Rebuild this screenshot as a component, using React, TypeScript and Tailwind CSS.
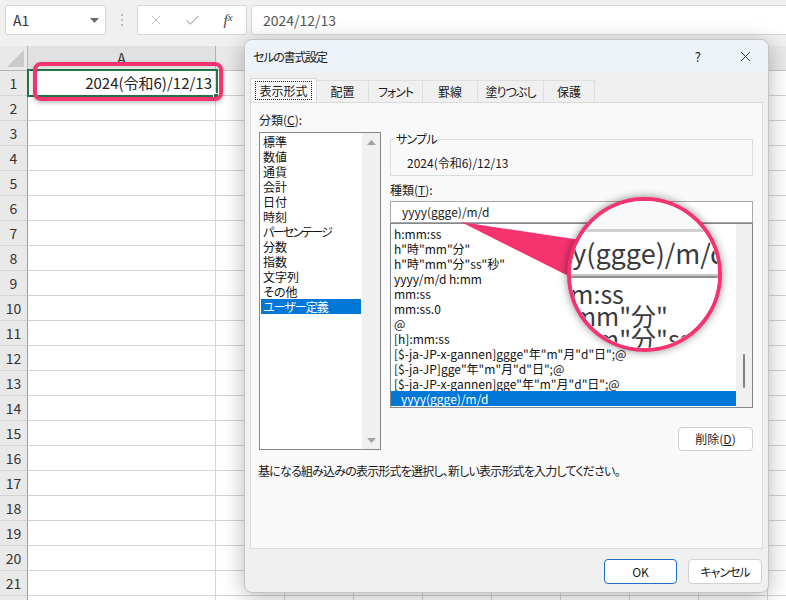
import { Check, X } from "lucide-react";

const CATEGORIES = [
  "標準",
  "数値",
  "通貨",
  "会計",
  "日付",
  "時刻",
  "パーセンテージ",
  "分数",
  "指数",
  "文字列",
  "その他",
  "ユーザー定義",
];

const FORMATS = [
  "h:mm:ss",
  'h"時"mm"分"',
  'h"時"mm"分"ss"秒"',
  "yyyy/m/d h:mm",
  "mm:ss",
  "mm:ss.0",
  "@",
  "[h]:mm:ss",
  '[$-ja-JP-x-gannen]ggge"年"m"月"d"日";@',
  '[$-ja-JP]gge"年"m"月"d"日";@',
  '[$-ja-JP-x-gannen]gge"年"m"月"d"日";@',
  "yyyy(ggge)/m/d",
];

const TABS = [
  { label: "配置", w: "w-[52px]" },
  { label: "フォント", w: "w-[54px] tracking-[-1px]" },
  { label: "罫線", w: "w-[55px]" },
  { label: "塗りつぶし", w: "w-[66px] tracking-[-1px]" },
  { label: "保護", w: "w-[51px]" },
];

const ROWS = Array.from({ length: 22 }, (_, i) => i + 1);
const OTHER_COLS = Array.from({ length: 9 }, (_, i) => i);

function FormulaBar() {
  return (
    <div className="flex h-[46px] items-start bg-[#f0f0f0] pl-[5px] pt-[5px]">
      <div className="flex h-[30px] w-[101px] items-center justify-between rounded-[3px] border border-[#d6d6d6] bg-white pl-[7px] pr-[6px] text-[14px] text-[#333]">
        <span>A1</span>
        <svg width="9" height="5" viewBox="0 0 9 5">
          <path d="M0 0h9L4.5 5z" fill="#6b6b6b" />
        </svg>
      </div>
      <div className="flex h-[30px] w-[31px] flex-col items-center justify-center gap-[3px]">
        <span className="h-[2px] w-[2px] rounded-full bg-[#a9a9a9]" />
        <span className="h-[2px] w-[2px] rounded-full bg-[#a9a9a9]" />
        <span className="h-[2px] w-[2px] rounded-full bg-[#a9a9a9]" />
      </div>
      <div className="flex h-[30px] w-[110px] items-center rounded-[3px] border border-[#d6d6d6] bg-white">
        <span className="flex w-[36px] justify-center text-[#b5b5b5]">
          <X size={16} strokeWidth={1.4} />
        </span>
        <span className="flex w-[36px] justify-center text-[#b5b5b5]">
          <Check size={17} strokeWidth={1.6} />
        </span>
        <span className="flex w-[36px] justify-center font-['Liberation_Serif',serif] text-[15px] italic text-[#444]">
          f<span className="text-[11px]">x</span>
        </span>
      </div>
      <div className="-mr-[10px] ml-[4px] flex h-[30px] flex-1 items-center rounded-[3px] border border-[#d6d6d6] bg-white pl-[11px] text-[14px] text-[#555]">
        2024/12/13
      </div>
    </div>
  );
}

function Sheet() {
  return (
    <div className="flex flex-col">
      <div className="flex h-[25px]">
        <div className="flex w-[28px] shrink-0 items-end justify-end border-b border-r border-[#b4b4b4] bg-[#e9e9e9] pb-[3px] pr-[3px]">
          <svg width="17" height="17" viewBox="0 0 17 17">
            <path d="M17 0V17H0z" fill="#cacaca" />
          </svg>
        </div>
        <div className="flex w-[188px] shrink-0 items-center justify-center border-b border-r border-[#b4b4b4] bg-[#e1e1e1] text-[14px] text-[#333]">
          A
        </div>
        {OTHER_COLS.map((c) => (
          <div
            key={c}
            className="w-[69px] shrink-0 border-b border-r border-[#c6c6c6] bg-[#e9e9e9]"
          />
        ))}
      </div>
      {ROWS.map((r) => (
        <div key={r} className="flex h-[25px]">
          <div className="flex w-[28px] shrink-0 items-center justify-center border-b border-r border-b-[#d4d4d4] border-r-[#9c9c9c] bg-[#e9e9e9] text-[14px] text-[#333]">
            {r}
          </div>
          <div className="flex w-[188px] shrink-0 items-center justify-end border-b border-r border-[#d4d4d4] pr-[3px] text-[15px] text-[#222]">
            {r === 1 ? "2024(令和6)/12/13" : ""}
          </div>
          {OTHER_COLS.map((c) => (
            <div
              key={c}
              className="w-[69px] shrink-0 border-b border-r border-[#d4d4d4]"
            />
          ))}
        </div>
      ))}
    </div>
  );
}

function CategoryList() {
  return (
    <div className="flex h-[318px] w-[122px] border border-[#828790] bg-white">
      <div className="flex flex-1 flex-col px-px pt-px">
        {CATEGORIES.map((c) => (
          <div
            key={c}
            className={
              c === "ユーザー定義"
                ? "h-[15px] bg-[#0078d7] pl-[2px] text-[12px] leading-[15px] tracking-[-1px] text-white"
                : c === "パーセンテージ"
                  ? "h-[15px] pl-[2px] text-[12px] leading-[15px] tracking-[-1.6px] text-[#111]"
                  : "h-[15px] pl-[2px] text-[12px] leading-[15px] text-[#111]"
            }
          >
            {c}
          </div>
        ))}
      </div>
      <div className="flex w-[18px] flex-col items-center justify-between bg-[#f0f0f0] pb-[6px] pt-[7px]">
        <svg width="9" height="5" viewBox="0 0 9 5">
          <path d="M0 5h9L4.5 0z" fill="#a3a3a3" />
        </svg>
        <svg width="9" height="5" viewBox="0 0 9 5">
          <path d="M0 0h9L4.5 5z" fill="#a3a3a3" />
        </svg>
      </div>
    </div>
  );
}

function FormatList() {
  return (
    <div className="flex h-[185px] border border-[#828790] bg-white">
      <div className="flex flex-1 flex-col pt-[2px]">
        {FORMATS.map((f, i) =>
          i === FORMATS.length - 1 ? (
            <div
              key={f}
              className="h-[15px] bg-[#0078d7] pl-[10px] text-[12px] leading-[15px] text-white"
            >
              {f}
            </div>
          ) : (
            <div
              key={f}
              className="h-[15px] whitespace-nowrap pl-[3px] text-[12px] leading-[15px] text-[#111]"
            >
              {f}
            </div>
          )
        )}
      </div>
      <div className="flex w-[16px] justify-center bg-[#f0f0f0] pt-[130px]">
        <div className="h-[34px] w-[2px] rounded-full bg-[#858585]" />
      </div>
    </div>
  );
}

function Dialog() {
  return (
    <div className="absolute left-[244px] top-[39px] flex h-[554px] w-[525px] flex-col rounded-[8px] border border-[#c4c4c4] bg-[#f0f0f0] text-[#1a1a1a] shadow-[0_4px_22px_rgba(0,0,0,0.28)]">
      <div className="flex h-[33px] items-center rounded-t-[8px] bg-[#eef3fa] pl-[8px] text-[12px]">
        <span className="tracking-[-1.2px]">セルの書式設定</span>
        <span className="ml-auto text-[13px]">?</span>
        <span className="ml-[36px] mr-[14px] flex text-[#222]">
          <X size={17} strokeWidth={1.3} />
        </span>
      </div>

      <div className="mt-[5px] flex h-[24px] items-end px-[5px] text-[12px]">
        <div className="flex h-[24px] w-[67px] items-center justify-center border border-b-0 border-[#d9d9d9] bg-[#f9f9f9]">
          <span className="border border-dotted border-[#222] px-[3px] leading-[17px]">
            表示形式
          </span>
        </div>
        {TABS.map((t) => (
          <div
            key={t.label}
            className={`flex h-[22px] ${t.w} items-center justify-center border border-b-0 border-l-0 border-[#dedede] bg-[#f0f0f0]`}
          >
            {t.label}
          </div>
        ))}
      </div>

      <div className="mx-[5px] flex h-[447px] flex-col border border-[#dadada] bg-[#f9f9f9] px-[8px] text-[12px]">
        <div className="flex gap-[9px]">
          <div className="flex w-[122px] flex-col pt-[8px]">
            <div className="mb-[3px] h-[18px] leading-[18px]">
              分類(<span className="underline">C</span>):
            </div>
            <CategoryList />
          </div>
          <div className="flex w-[363px] flex-col">
            <div className="relative mt-[36px] h-[37px] border border-[#dcdcdc] pl-[16px] pt-[14px] leading-[18px]">
              <span className="absolute -top-[9px] left-[4px] bg-[#f9f9f9] px-px leading-[16px] tracking-[-0.8px]">
                サンプル
              </span>
              2024(令和6)/12/13
            </div>
            <div className="mt-[5px] h-[18px] leading-[18px]">
              種類(<span className="underline">T</span>):
            </div>
            <div className="mt-[2px] flex h-[22px] items-center border border-[#a8a8a8] bg-white pl-[11px]">
              yyyy(ggge)/m/d
            </div>
            <FormatList />
            <button
              type="button"
              className="mt-[19px] flex h-[24px] w-[75px] items-center justify-center self-end rounded-[4px] border border-[#d0d0d0] bg-white"
            >
              削除(<span className="underline">D</span>)
            </button>
          </div>
        </div>
        <p className="-ml-px mt-[12px] leading-[16px] tracking-[-0.8px]">
          基になる組み込みの表示形式を選択し、新しい表示形式を入力してください。
        </p>
      </div>

      <div className="mt-[10px] flex justify-end gap-[11px] pr-[6px] text-[12px]">
        <button
          type="button"
          className="flex h-[25px] w-[73px] items-center justify-center rounded-[4px] border border-[#1f6fc5] bg-white"
        >
          OK
        </button>
        <button
          type="button"
          className="flex h-[25px] w-[74px] items-center justify-center rounded-[4px] border border-[#d0d0d0] bg-white tracking-[-1px]"
        >
          キャンセル
        </button>
      </div>
    </div>
  );
}

function Magnifier() {
  return (
    <>
      <svg
        className="pointer-events-none absolute left-0 top-0"
        width="786"
        height="600"
        viewBox="0 0 786 600"
      >
        <path d="M461 222L640 249L640 312Z" fill="#f5336f" />
      </svg>
      <div className="absolute left-[567px] top-[197px] h-[155px] w-[155px] overflow-hidden rounded-full border-[4px] border-[#f5336f] bg-white shadow-[0_0_8px_rgba(0,0,0,0.45)]">
        <div className="flex h-full flex-col">
          <div className="h-[28px] bg-[#f9f9f9]" />
          <div className="h-[3px] bg-[#d0d0d0]" />
          <div className="relative h-[42px] bg-white">
            <span className="absolute -left-[41px] top-[3px] whitespace-nowrap text-[27px] leading-[36px] text-[#3b3b3b]">
              yyyy(ggge)/m/d
            </span>
          </div>
          <div className="h-[2px] bg-[#c4c4c4]" />
          <div className="h-[2px] bg-[#8f8f8f]" />
          <div className="relative flex-1 bg-white text-[25px] leading-[22px] text-[#3b3b3b]">
            <span className="absolute -left-[46px] top-[4px] whitespace-nowrap">
              h:mm:ss
            </span>
            <span className="absolute -left-[62px] top-[26px] whitespace-nowrap">
              h"時"mm"分"
            </span>
            <span className="absolute -left-[62px] top-[49px] whitespace-nowrap">
              h"時"mm"分"ss"秒"
            </span>
          </div>
        </div>
      </div>
    </>
  );
}

export default function App() {
  return (
    <div className="relative h-[600px] w-[786px] overflow-hidden bg-white font-['Noto_Sans_CJK_JP',sans-serif] [font-feature-settings:'palt']">
      <FormulaBar />
      <Sheet />

      {/* selected cell A1 */}
      <div className="absolute left-[27px] top-[69px] h-[28px] w-[191px] border-2 border-[#217346]" />
      <div className="absolute left-[213px] top-[93px] h-[6px] w-[6px] border border-white bg-[#217346]" />
      <div className="absolute left-[33px] top-[62px] h-[39px] w-[190px] rounded-[8px] border-[4px] border-[#f5336f] shadow-[0_2px_4px_rgba(0,0,0,0.25)]" />

      <Dialog />
      <Magnifier />
    </div>
  );
}
